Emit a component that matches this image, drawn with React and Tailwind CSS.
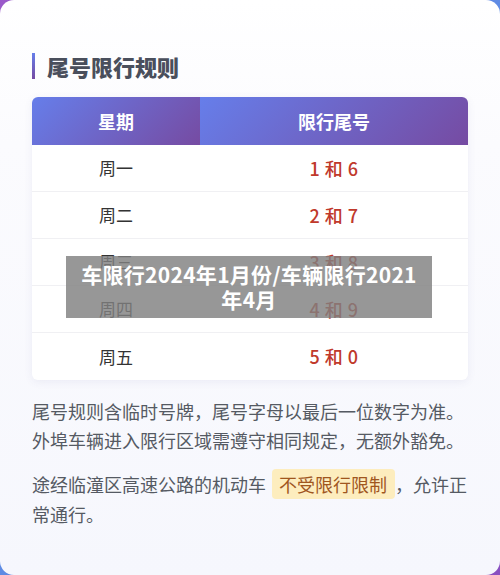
const rows = [
  { dia: '周一', nums: '1 和 6' },
  { dia: '周二', nums: '2 和 7' },
  { dia: '周三', nums: '3 和 8' },
  { dia: '周四', nums: '4 和 9' },
  { dia: '周五', nums: '5 和 0' },
];

export default function App() {
  return (
    <div className="relative w-[500px] h-[575px] overflow-hidden bg-[linear-gradient(135deg,#9b59c9_0%,#5b8fe6_50%,#8a4fc0_100%)] font-['Noto_Sans_CJK_SC','Noto_Sans',sans-serif]">
      {/* cartão branco */}
      <div className="h-full w-full rounded-[14px] bg-[linear-gradient(180deg,#ffffff_0%,#fbfbfe_25%,#f6f7fd_100%)] px-8 pt-[51px]">
        {/* título */}
        <div className="flex items-center gap-3 h-[30px]">
          <div className="w-[3px] h-[26px] bg-[linear-gradient(180deg,#667eea,#764ba2)]" />
          <h1 className="text-[22px] font-black text-[#4a4f5c] leading-none">尾号限行规则</h1>
        </div>

        {/* tabela */}
        <div className="mt-[16px] rounded-md overflow-hidden bg-white shadow-[0_2px_8px_rgba(80,80,140,0.08)]">
          <div className="flex h-[48px] text-white text-[18px] font-bold">
            <div className="w-[168px] flex items-center justify-center bg-[linear-gradient(135deg,#667eea,#764ba2)]">星期</div>
            <div className="flex-1 flex items-center justify-center bg-[linear-gradient(135deg,#667eea,#764ba2)]">限行尾号</div>
          </div>
          {rows.map((r, i) => (
            <div key={r.dia} className={`flex h-[47px] items-center ${i < rows.length - 1 ? 'border-b border-[#f0f0f3]' : ''}`}>
              <div className="w-[168px] text-center text-[17px] text-[#333]">{r.dia}</div>
              <div className="flex-1 text-center text-[18px] font-medium text-[#c0392b] tracking-[0.5px]">{r.nums}</div>
            </div>
          ))}
        </div>

        {/* textos */}
        <p className="mt-[17px] text-[18px] leading-[29px] text-[#555a63]">
          尾号规则含临时号牌，尾号字母以最后一位数字为准。外埠车辆进入限行区域需遵守相同规定，无额外豁免。
        </p>
        <p className="mt-[14px] -mr-2 text-[18px] leading-[30px] text-[#555a63]">
          途经临潼区高速公路的机动车
          <span className="ml-[6px] rounded bg-[#fdedbe] pl-[7px] pr-[8px] py-[2px] text-[#a0561e]">不受限行限制</span>
          ，允许正常通行。
        </p>
      </div>

      {/* faixa sobreposta */}
      <div className="absolute left-[66px] top-[256px] w-[366px] h-[62px] bg-[rgba(128,128,128,0.82)] flex items-center justify-center">
        <p className="text-center text-white text-[21px] font-bold leading-[25px] tracking-[0.3px] whitespace-nowrap">
          车限行2024年1月份/车辆限行2021
          <br />
          年4月
        </p>
      </div>
    </div>
  );
}
